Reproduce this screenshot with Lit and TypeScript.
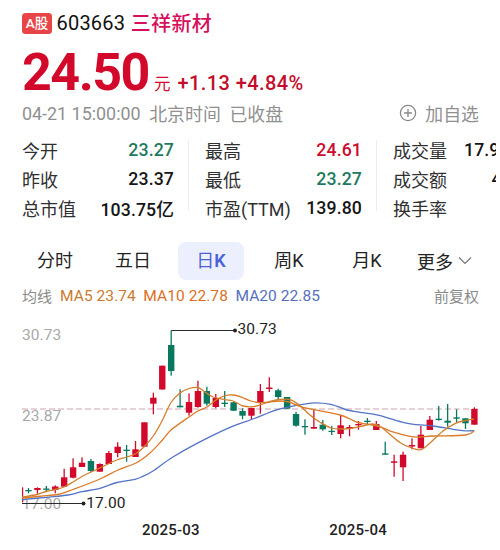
import { LitElement, html, svg, css } from "lit";
import { customElement } from "lit/decorators.js";
import { classMap } from "lit/directives/class-map.js";

type Tone = "up" | "down" | "plain";
interface Stat { label: string; value: string; tone: Tone; }
type Candle = ["r" | "g", number, number, number, number];
type Point = [number, number];

const STATS: Stat[][] = [
  [
    { label: "今开", value: "23.27", tone: "down" },
    { label: "昨收", value: "23.37", tone: "plain" },
    { label: "总市值", value: "103.75亿", tone: "plain" },
  ],
  [
    { label: "最高", value: "24.61", tone: "up" },
    { label: "最低", value: "23.27", tone: "down" },
    { label: "市盈(TTM)", value: "139.80", tone: "plain" },
  ],
  [
    { label: "成交量", value: "17.9", tone: "plain" },
    { label: "成交额", value: "4", tone: "plain" },
    { label: "换手率", value: "", tone: "plain" },
  ],
];

// colour, high, body top, body bottom, low
const CANDLES: Candle[] = [
  ["g", 488, 490, 491.3, 493.3], ["r", 487.3, 488, 490, 493.7], ["g", 486, 488.5, 489.8, 491.3],
  ["r", 485.3, 486.5, 490, 493.3], ["r", 468.7, 477.3, 486.7, 486.7], ["r", 458.3, 467.3, 477.7, 478.3],
  ["r", 457.3, 462.7, 467, 467], ["g", 459, 461, 471, 472.3], ["r", 463.3, 464, 471.7, 471.7],
  ["r", 451, 453, 464, 464], ["r", 442.3, 446.7, 453, 457.3], ["g", 445, 449.7, 451, 461.7],
  ["r", 441, 449.3, 457, 457], ["r", 422.3, 422.3, 446.7, 446.7], ["r", 392.7, 397.7, 403.7, 414.3],
  ["r", 365.7, 365.7, 389.5, 389.5], ["g", 330.3, 345, 371, 375.7], ["g", 389.3, 405.7, 407.3, 407.3],
  ["r", 393.3, 402, 412.7, 415.7], ["r", 380.7, 391, 407, 407.7], ["g", 386.7, 391, 403.7, 405.7],
  ["r", 394, 398, 407, 408.3], ["g", 391, 402.7, 404, 407], ["g", 402, 402.3, 410.7, 411],
  ["g", 408.3, 411, 415.7, 419.3], ["r", 407.7, 408, 415.7, 420], ["r", 384, 391, 402.7, 413.7],
  ["r", 377.3, 387.5, 389, 392], ["g", 388.7, 390.3, 397, 399.7], ["g", 397, 397, 408.7, 408.7],
  ["g", 411.7, 414, 425.7, 426.7], ["g", 419.3, 426, 427.3, 434.7], ["r", 410, 427, 428.7, 428.7],
  ["g", 420, 424.7, 429.3, 430.7], ["g", 426, 430.8, 432, 435], ["r", 415, 425.3, 434, 438.3],
  ["r", 425, 427, 429, 436.3], ["r", 421, 424, 425.3, 429.7], ["g", 418, 420.7, 422, 424.7],
  ["r", 421, 424, 430, 430], ["g", 441.7, 453.3, 454.7, 454.7], ["r", 454.7, 461.3, 462.8, 476.7],
  ["r", 451.7, 454.7, 467.3, 481], ["r", 438.3, 445, 446.5, 449.3], ["r", 426, 434.7, 448.3, 448.3],
  ["r", 416, 419.7, 430, 430], ["g", 406, 418.7, 420, 420.7], ["g", 404, 420.7, 422.7, 426.7],
  ["g", 409.3, 417.3, 418.7, 422.3], ["g", 418.3, 418.3, 423.3, 429], ["r", 407.3, 409, 424.7, 424.7],
];

const MA5: Point[] = [
  [22, 497], [37, 494.5], [46, 491.5], [55, 489.5], [64, 487], [73, 482], [82, 476.5], [91, 472], [100, 468],
  [109, 463.5], [118, 459.5], [127, 457], [136, 453.5], [145, 446], [154, 435], [162, 421], [171, 402.5],
  [180, 393], [189, 388.5], [198, 387.5], [205, 392], [213, 397], [225, 399.7], [233, 401], [243, 406],
  [253, 406.7], [260, 405], [272, 401], [280, 399.5], [290, 399.7], [300, 405.7], [310, 415], [320, 422.3],
  [331, 428], [343, 429], [353, 428], [363, 426], [373, 424], [381, 427], [400, 442.5], [412, 448],
  [421, 449.7], [430, 443], [443, 431], [455, 423.7], [463, 421], [474, 419],
];
const MA10: Point[] = [
  [22, 498], [46, 495.7], [60, 494], [73, 489.5], [100, 479], [118, 470], [136, 463], [150, 453],
  [162, 440.5], [171, 430], [189, 417], [198, 411], [207, 407], [216, 400], [224, 396], [233, 395],
  [242, 397.3], [251, 401], [260, 402.7], [269, 402], [280, 401], [289, 402], [300, 406.3], [314, 409.7],
  [340, 415], [350, 419], [358, 422.5], [372, 425], [381, 427], [391, 431.3], [410, 436.3], [420, 437],
  [433, 436], [465.7, 435], [474.4, 430.7],
];
const MA20: Point[] = [
  [22, 499.7], [46, 497.3], [68, 495], [82, 491.7], [100, 488.3], [117, 482.5], [135, 479.3], [143, 476.3],
  [153, 471], [171.7, 457.7], [197, 443.3], [230, 427.3], [253, 419], [275, 410.3], [290, 406.7],
  [303, 404.3], [315, 402.8], [331, 404.3], [347, 410], [360, 412.3], [379, 415.3], [404, 422.7],
  [417, 424.7], [433, 426], [453, 429.3], [465, 430.8], [474, 430.7],
];

const FIRST_X = 28.5;
const STEP = 8.918;

// Catmull-Rom spline through the given points
function smooth(p: Point[]): string {
  let d = `M${p[0][0]} ${p[0][1]}`;
  for (let i = 0; i < p.length - 1; i++) {
    const a = p[Math.max(i - 1, 0)], b = p[i], c = p[i + 1], e = p[Math.min(i + 2, p.length - 1)];
    d += `C${b[0] + (c[0] - a[0]) / 6} ${b[1] + (c[1] - a[1]) / 6} ${c[0] - (e[0] - b[0]) / 6} ${c[1] - (e[1] - b[1]) / 6} ${c[0]} ${c[1]}`;
  }
  return d;
}

@customElement("kline-chart")
export class KlineChart extends LitElement {
  static styles = css`
    :host { display: block; }
    svg { display: block; }
    text { font-family: Roboto, sans-serif; font-size: 15.5px; letter-spacing: 0.1px; }
    .axis { fill: #a8a8a8; }
    .mark { fill: #222; }
    .r { fill: #d2092b; }
    .g { fill: #08795f; }
    .ma { fill: none; stroke-width: 1.3; }
    .ma5 { stroke: #d27f2c; }
    .ma10 { stroke: #dc7a28; }
    .ma20 { stroke: #5374c6; }
    .dash { stroke: #cfa3ad; stroke-width: 1.2; stroke-dasharray: 6 3; }
    .lead { stroke: #2b2b2b; stroke-width: 1.2; fill: none; }
  `;

  private candle([tone, high, top, bottom, low]: Candle, i: number) {
    const x = FIRST_X + STEP * i;
    return svg`<g class=${tone}>
      <rect x=${x - 0.65} y=${high} width="1.3" height=${low - high}></rect>
      <rect x=${x - 3.2} y=${top} width="6.4" height=${bottom - top}></rect>
    </g>`;
  }

  render() {
    return html`<svg width="500" height="204" viewBox="0 310 500 204">
      <text class="axis" x="22" y="340">30.73</text>
      <text class="axis" x="22" y="421">23.87</text>
      <text class="axis" x="22" y="508.5">17.00</text>
      <line class="dash" x1="22" y1="409" x2="479" y2="409"></line>
      <rect class="r" x="22" y="487.3" width="1.2" height="15"></rect>
      ${CANDLES.map((c, i) => this.candle(c, i))}
      <path class="ma ma20" d=${smooth(MA20)}></path>
      <path class="ma ma10" d=${smooth(MA10)}></path>
      <path class="ma ma5" d=${smooth(MA5)}></path>
      <path class="lead" d="M171.3 330.5H235M22 503.5H83.5"></path>
      <circle class="mark" cx="235" cy="330.5" r="2"></circle>
      <circle class="mark" cx="83.5" cy="503.5" r="2"></circle>
      <text class="mark" x="237.5" y="334">30.73</text>
      <text class="mark" x="86.2" y="507.5">17.00</text>
    </svg>`;
  }
}

@customElement("app-root")
export class AppRoot extends LitElement {
  static styles = css`
    :host {
      display: flex; flex-direction: column; width: 500px; height: 550px; overflow: hidden;
      background: #fff; color: #222; white-space: nowrap;
      font-family: Roboto, "Noto Sans CJK SC", sans-serif;
      box-sizing: border-box; padding-top: 8px;
    }
    .title { display: flex; align-items: center; height: 30px; padding-left: 22px; }
    .badge {
      width: 30px; height: 21px; border-radius: 3.5px; background: #e84548; color: #fff;
      font-size: 13.5px; line-height: 21px; text-align: center; font-weight: 500;
    }
    .code { margin-left: 4.5px; font-size: 20px; letter-spacing: 0.2px; color: #111; }
    .name { margin: -2px 0 0 5.5px; font-size: 20px; letter-spacing: 0.4px; color: #d5105c; font-weight: 500; }
    .quote { display: flex; align-items: baseline; height: 63px; line-height: 69px; padding-left: 22px; color: #d2092b; }
    .price { font-size: 52px; font-weight: 700; letter-spacing: -1.5px; }
    .unit { margin-left: 5px; font-size: 16.5px; }
    .change { margin-left: 7px; font-size: 20px; font-weight: 500; letter-spacing: 0.42px; color: #c20e2c; }
    .meta { display: flex; align-items: center; height: 26px; margin-top: -1px; padding: 0 21px 0 22px; font-size: 17.9px; color: #909090; }
    .meta .zone { margin-left: 8.6px; }
    .add { display: flex; align-items: center; gap: 8px; margin-left: auto; }
    .stats { display: flex; margin-top: 9px; width: 496px; height: 89px; overflow: hidden; }
    .group { display: grid; grid-template-rows: repeat(3, 29.3px); flex: none; box-sizing: border-box; }
    .g0 { width: 189px; padding: 0 15px 0 22px; }
    .g1 { width: 188px; padding: 0 15px 0 16px; }
    .g2 { width: 140px; padding: 0 0 0 16px; }
    .g0, .g1 { background: linear-gradient(#ececec, #ececec) right 5px / 1px 71px no-repeat; }
    .stat { display: flex; align-items: center; justify-content: space-between; font-size: 18px; }
    .label { color: #303030; }
    .value { font-weight: 500; font-size: 17.7px; letter-spacing: 0.1px; }
    .g2 .value { flex: none; width: 53px; }
    .g2 .shift { width: 25.5px; }
    .up { color: #cb0d2f; } .down { color: #1d7a60; } .plain { color: #151515; }
    .tabs { display: flex; align-items: center; margin-top: 17px; height: 39px; padding-left: 22px; font-size: 18px; }
    .tab { width: 66px; height: 38px; line-height: 38px; margin-right: 12px; text-align: center; flex: none; }
    .on { background: #eceffd; border-radius: 8px; color: #4a62d6; }
    .on b { font-weight: 600; }
    .more { display: flex; align-items: center; justify-content: center; gap: 5px; width: 65px; }
    .legend { display: flex; align-items: center; height: 24px; margin-top: 3px; padding: 0 21px 0 22px; font-size: 15px; color: #8a8a8a; }
    .m5 { color: #cc7a2d; margin-left: 8px; } .m10 { color: #dc7022; margin-left: 7.5px; } .m20 { color: #5570bd; margin-left: 7.5px; }
    .legend .num { font-size: 15.5px; letter-spacing: 0.06px; padding-top: 2px; }
    .adj { margin-left: auto; }
    .chart { margin-top: 3px; flex: none; }
    .dates { display: flex; height: 32px; align-items: center; padding-left: 142px; gap: 129.5px; font-size: 15px; letter-spacing: 0.22px; font-weight: 500; }
    svg { display: block; fill: none; }
  `;

  render() {
    return html`
      <div class="title"><span class="badge">A股</span><span class="code">603663</span><span class="name">三祥新材</span></div>
      <div class="quote"><span class="price">24.50</span><span class="unit">元</span><span class="change">+1.13 +4.84%</span></div>
      <div class="meta">
        <span class="time">04-21 15:00:00</span><span class="zone">北京时间</span><span class="zone">已收盘</span>
        <span class="add">
          <svg width="18" height="18" viewBox="0 0 18 18" stroke="#888" stroke-width="1.3"><circle cx="9" cy="9" r="7.6"></circle><path d="M5 9H13M9 5V13"></path></svg>
          加自选
        </span>
      </div>
      <div class="stats">
        ${STATS.map((group, g) => html`<div class="group g${g}">
          ${group.map((s) => html`<div class="stat">
            <span class="label">${s.label}</span>
            <span class=${classMap({ value: true, [s.tone]: true, shift: s.label === "成交额" })}>${s.value}</span>
          </div>`)}
        </div>`)}
      </div>
      <div class="tabs">
        <span class="tab">分时</span><span class="tab">五日</span><span class="tab on">日<b>K</b></span><span class="tab">周K</span><span class="tab">月K</span>
        <span class="more">更多<svg width="14" height="9" viewBox="0 0 14 9" stroke="#777" stroke-width="1.2"><path d="M1 1.5L7 7.5L13 1.5"></path></svg></span>
      </div>
      <div class="legend">
        <span>均线</span><span class="num m5">MA5 23.74</span><span class="num m10">MA10 22.78</span><span class="num m20">MA20 22.85</span>
        <span class="adj">前复权</span>
      </div>
      <kline-chart class="chart"></kline-chart>
      <div class="dates"><span>2025-03</span><span>2025-04</span></div>
    `;
  }
}
